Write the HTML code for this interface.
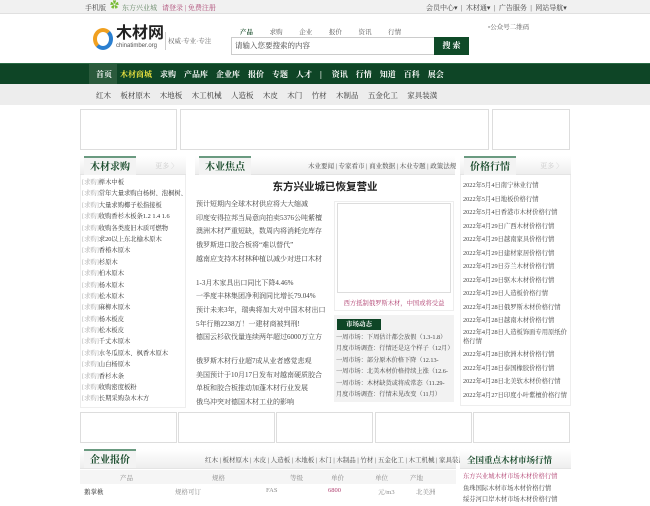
<!DOCTYPE html>
<html><head><meta charset="utf-8"><style>
*{margin:0;padding:0;box-sizing:border-box}
body{width:650px;height:500px;overflow:hidden;background:#fff;font-family:"Liberation Serif","Noto Serif CJK SC",serif;font-size:7px;color:#333;position:relative}
.a{position:absolute}
.box{position:absolute;border:1px solid #ddd;background:#fff}
.hd{position:absolute;height:19px;background:linear-gradient(#fff,#eee);border-bottom:1px solid #e4e4e4}
.hd b{position:absolute;left:4px;top:0;height:19px;line-height:19px;padding:0 6px;font-size:10px;color:#1c4d2e;border-top:2px solid #6a9a80;background:#f3f3f3;font-weight:bold}
.more{position:absolute;right:8px;top:5px;color:#ccc;font-size:7px}
.list div{height:11.4px;line-height:11.4px;white-space:nowrap;overflow:hidden}
.list span{color:#aaa}
</style></head><body>
<!-- top bar -->
<div class="a" style="left:0;top:0;width:650px;height:14px;background:#f1f1f1;border-bottom:1px solid #e0e0e0"></div>
<div class="a" style="left:85px;top:3px;font-size:7px;color:#444">手机版</div>
<div class="a" style="left:110px;top:1px;width:8px;height:9px;color:#7b3;font-size:9px;line-height:9px">✿</div>
<div class="a" style="left:122px;top:3px;color:#6a8a6a">东方兴业城</div>
<div class="a" style="left:162px;top:3px;color:#b0507a">请登录 | 免费注册</div>
<div class="a" style="left:426px;top:3px;color:#444">会员中心▾ &nbsp;|&nbsp; 木材通▾ &nbsp;|&nbsp; 广告服务 &nbsp;|&nbsp; 网站导航▾</div>
<!-- logo -->
<div class="a" style="left:93px;top:28px;width:20px;height:22px;border:4px solid #f0a020;border-radius:50%;border-right-color:#2a7fd0;border-bottom-color:#2a7fd0"></div>
<div class="a" style="left:116px;top:25px;font-size:16px;font-weight:bold;color:#222;font-family:'Liberation Sans','Noto Sans CJK SC',sans-serif;line-height:18px">木材网</div>
<div class="a" style="left:116px;top:43px;font-size:6px;color:#555;font-family:'Liberation Sans',sans-serif">chinatimber.org</div>
<div class="a" style="left:165px;top:32px;height:18px;border-left:1px solid #ccc"></div>
<div class="a" style="left:168px;top:36px;color:#666;font-size:6.5px">权威·专业·专注</div>
<div class="a" style="left:240px;top:27px;color:#555;font-size:6.5px;word-spacing:15px"><b style="color:#2a5a3a">产品</b> 求购 企业 报价 资讯 行情</div>
<div class="a" style="left:231px;top:37px;width:204px;height:18px;border:1px solid #ccc;padding-left:3px;line-height:16px;color:#444;font-size:7.5px">请输入您要搜索的内容</div>
<div class="a" style="left:434px;top:37px;width:35px;height:18px;background:#0f4a28;color:#fff;font-weight:bold;line-height:18px;text-align:center;font-size:8px">搜 索</div>
<div class="a" style="left:488px;top:22px;color:#555;font-size:6.5px">▫公众号二维码</div>
<!-- nav -->
<div class="a" style="left:0;top:63px;width:650px;height:21px;background:#0e4526;border-top:1px solid #2a6b45"></div>
<div class="a" style="left:89px;top:64px;width:28px;height:20px;background:#2a5a3c"></div>
<div class="a" style="left:96px;top:69px;color:#fff;font-size:8px;font-weight:bold;white-space:pre">首页    <span style="color:#e8e040">木材商城</span>    求购    产品库    企业库    报价    专题    人才    |     资讯    行情    知道    百科    展会</div>
<div class="a" style="left:0;top:84px;width:650px;height:21px;background:#ededed"></div>
<div class="a" style="left:96px;top:90px;color:#333;font-size:7.5px;white-space:pre">红木     板材原木     木地板     木工机械     人造板     木皮     木门     竹材     木制品     五金化工     家具装潢</div>
<!-- ads -->
<div class="box" style="left:80px;top:109px;width:97px;height:41px"></div>
<div class="box" style="left:180px;top:109px;width:309px;height:41px"></div>
<div class="box" style="left:492px;top:109px;width:78px;height:41px"></div>
<!-- left col -->
<div class="box" style="left:80px;top:156px;width:106px;height:252px;border-color:#eee"></div>
<div class="hd" style="left:80px;top:156px;width:106px"><b>木材求购</b><span class="more">更多 〉</span></div>
<div class="a list" style="left:82px;top:177px;width:103px;font-size:6.3px">
<div><span>[求购]</span>榉木中板</div><div><span>[求购]</span>常年大量求购白杨树、泡桐树、</div><div><span>[求购]</span>大量求购椰子松指接板</div><div><span>[求购]</span>收购香杉木板条1.2 1.4 1.6</div><div><span>[求购]</span>收购各类废旧木质可燃物</div><div><span>[求购]</span>求20以上东北榆木原木</div><div><span>[求购]</span>香椿木原木</div><div><span>[求购]</span>杉原木</div><div><span>[求购]</span>柏木原木</div><div><span>[求购]</span>杨木原木</div><div><span>[求购]</span>松木原木</div><div><span>[求购]</span>麻柳木原木</div><div><span>[求购]</span>杨木板皮</div><div><span>[求购]</span>松木板皮</div><div><span>[求购]</span>千丈木原木</div><div><span>[求购]</span>水冬瓜原木、枫香木原木</div><div><span>[求购]</span>山白杨原木</div><div><span>[求购]</span>香杉木条</div><div><span>[求购]</span>收购密度板粉</div><div><span>[求购]</span>长期采购杂木木方</div>
</div>
<!-- middle -->
<div class="hd" style="left:195px;top:156px;width:260px"><b>木业焦点</b></div>
<div class="a" style="left:308px;top:161px;font-size:6.5px;color:#444">木业要闻 | 专家看市 | 商业数据 | 木业专题 | 政策法规</div>
<div class="a" style="left:195px;top:179px;width:260px;text-align:center;font-size:10.5px;font-weight:bold;color:#222;font-family:'Liberation Sans','Noto Sans CJK SC',sans-serif">东方兴业城已恢复营业</div>
<div class="a" style="left:196px;top:198px;font-size:7px;line-height:13.7px;color:#444">预计短期内全球木材供应将大大缩减<br>印度安得拉邦当局意向拍卖5376公吨紫檀<br>澳洲木材严重短缺，数周内将消耗完库存<br>俄罗斯进口胶合板将“难以替代”<br>越南应支持木材林种植以减少对进口木材<br><div style="height:10px"></div>1-3月木家具出口同比下降4.46%<br>一季度丰林集团净利润同比增长79.04%<br>预计未来3年，瑞典将加大对中国木材出口<br>5年行贿2238万！一建材商被判刑!<br>德国云杉砍伐量连续两年超过6000万立方<br><div style="height:10px"></div>俄罗斯木材行业超7成从业者感觉悲观<br>美国预计于10月17日发布对越南硬质胶合<br>单板和胶合板推动加蓬木材行业发展<br>俄乌冲突对德国木材工业的影响</div>
<div class="box" style="left:334px;top:201px;width:120px;height:110px;border-color:#eee"></div>
<div class="box" style="left:337px;top:203px;width:114px;height:90px"></div>
<div class="a" style="left:334px;top:298px;width:120px;text-align:center;color:#b04070;font-size:6.3px">西方抵制俄罗斯木材，中国或将受益</div>
<div class="a" style="left:334px;top:315px;width:120px;height:87px;background:#f2f2f2"></div>
<div class="a" style="left:337px;top:319px;width:44px;height:11px;background:#0e4526;color:#fff;font-size:6.5px;text-align:center;line-height:11px;font-weight:bold">市场动态</div>
<div class="a" style="left:336px;top:332px;font-size:6.2px;line-height:11.4px;color:#444;white-space:nowrap">一周市场：下周估计都会放假（1.3-1.8）<br>月度市场调查：行情还是这个样子（12月）<br>一周市场：部分原木价格下降（12.13-<br>一周市场：北美木材价格持续上涨（12.6-<br>一周市场：木材缺货或将成常态（11.29-<br>月度市场调查：行情未见改变（11月）</div>
<!-- right -->
<div class="box" style="left:460px;top:156px;width:111px;height:250px;border-color:#eee"></div>
<div class="hd" style="left:460px;top:156px;width:111px"><b>价格行情</b><span class="more">更多 〉</span></div>
<div class="a" style="left:463px;top:179px;width:106px;font-size:6.3px;line-height:13.5px;color:#444">2022年5月4日南宁林业行情<br>2022年5月4日地板价格行情<br>2022年5月4日香港市木材价格行情<br>2022年4月29日广西木材价格行情<br>2022年4月29日越南家具价格行情<br>2022年4月29日建材家居价格行情<br>2022年4月29日芬兰木材价格行情<br>2022年4月29日驱木木材价格行情<br>2022年4月29日人造板价格行情<br>2022年4月28日俄罗斯木材价格行情<br>2022年4月28日越南木材价格行情<br><span style="line-height:9px;display:inline-block">2022年4月28日人造板饰面专用原纸价格行情</span><br>2022年4月28日欧洲木材价格行情<br>2022年4月28日泰国橡胶价格行情<br>2022年4月28日北美软木材价格行情<br>2022年4月27日印度小叶紫檀价格行情</div>
<!-- bottom ads -->
<div class="box" style="left:80px;top:412px;width:97px;height:31px"></div>
<div class="box" style="left:178px;top:412px;width:97px;height:31px"></div>
<div class="box" style="left:276px;top:412px;width:97px;height:31px"></div>
<div class="box" style="left:375px;top:412px;width:97px;height:31px"></div>
<div class="box" style="left:473px;top:412px;width:97px;height:31px"></div>
<!-- quotes -->
<div class="hd" style="left:80px;top:449px;width:376px;height:20px"><b>企业报价</b></div>
<div class="a" style="left:205px;top:455px;font-size:6.5px;color:#444">红木 | 板材原木 | 木皮 | 人造板 | 木地板 | 木门 | 木制品 | 竹材 | 五金化工 | 木工机械 | 家具装潢</div>
<div class="a" style="left:80px;top:470px;width:376px;height:14px;background:#f5f5f5"></div>
<div class="a" style="left:120px;top:473px;color:#888;font-size:6.5px">产品</div>
<div class="a" style="left:212px;top:473px;color:#888;font-size:6.5px">规格</div>
<div class="a" style="left:290px;top:473px;color:#888;font-size:6.5px">等级</div>
<div class="a" style="left:331px;top:473px;color:#888;font-size:6.5px">单价</div>
<div class="a" style="left:375px;top:473px;color:#888;font-size:6.5px">单位</div>
<div class="a" style="left:410px;top:473px;color:#888;font-size:6.5px">产地</div>
<div class="a" style="left:84px;top:487px;font-size:6.5px;color:#333">鹅掌楸</div>
<div class="a" style="left:175px;top:487px;font-size:6.5px;color:#888">规格可订</div>
<div class="a" style="left:266px;top:487px;font-size:6.5px;color:#888">FAS</div>
<div class="a" style="left:328px;top:487px;font-size:6.5px;color:#b04070">6800</div>
<div class="a" style="left:378px;top:487px;font-size:6.5px;color:#888">元/m3</div>
<div class="a" style="left:416px;top:487px;font-size:6.5px;color:#888">北美洲</div>
<div class="hd" style="left:460px;top:449px;width:111px;height:20px"></div>
<div class="a" style="left:467px;top:454px;font-size:8.5px;font-weight:bold;color:#1c4d2e">全国重点木材市场行情</div>
<div class="a" style="left:463px;top:471px;font-size:6.3px;line-height:11.5px;color:#444;white-space:nowrap"><span style="color:#b04070">东方兴业城木材市场木材价格行情</span><br>鱼珠国际木材市场木材价格行情<br>绥芬河口岸木材市场木材价格行情</div>
</body></html>
